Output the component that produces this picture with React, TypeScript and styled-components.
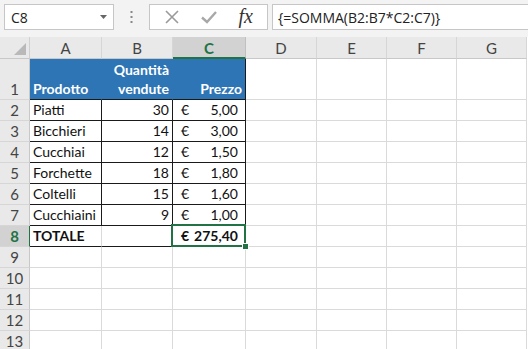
import React from "react";
import styled, { createGlobalStyle } from "styled-components";

const GlobalStyle = createGlobalStyle`
  html, body { margin: 0; padding: 0; background: #ffffff; }
  body { font-family: "Lato", "Liberation Sans", sans-serif; overflow: hidden; }
`;

const Page = styled.div`
  width: 528px;
  height: 349px;
  display: flex;
  flex-direction: column;
  overflow: hidden;
  background: #ffffff;
`;

const Toolbar = styled.div`
  flex: 0 0 37px;
  height: 37px;
  box-sizing: border-box;
  padding: 4px 0 7px 4px;
  display: flex;
  align-items: stretch;
  background: #f3f3f3;
`;

const NameBox = styled.div`
  width: 110px;
  box-sizing: border-box;
  border: 1px solid #c6c6c6;
  background: #ffffff;
  display: flex;
  align-items: center;
  justify-content: space-between;
  padding: 0 6px 0 6px;
  font-family: "Open Sans", "Liberation Sans", sans-serif;
  font-size: 14px;
  color: #222;
`;

const Separator = styled.div`
  width: 35px;
  display: flex;
  align-items: center;
  justify-content: center;
`;

const FxButtons = styled.div`
  width: 119px;
  box-sizing: border-box;
  border: 1px solid #c6c6c6;
  background: #ffffff;
  display: flex;
  align-items: center;
  justify-content: space-around;
  padding: 0 4px 0 4px;
`;

const FxLabel = styled.span`
  font-family: "Liberation Serif", "DejaVu Serif", serif;
  font-style: italic;
  font-size: 20px;
  color: #333;
  line-height: 1;
  margin-top: -2px;
`;

const FormulaInput = styled.div`
  flex: 1;
  margin-left: 4px;
  box-sizing: border-box;
  border: 1px solid #c6c6c6;
  border-right: none;
  background: #ffffff;
  display: flex;
  align-items: center;
  padding-left: 5px;
  font-family: "Open Sans", "Liberation Sans", sans-serif;
  font-size: 14px;
  color: #222;
  white-space: nowrap;
`;

const Sheet = styled.div`
  flex: 0 0 auto;
  display: grid;
  grid-template-columns: 30px 72px 71px 73px 71px 70px 70px 70px;
  grid-template-rows: 22px 41px repeat(13, 21px);
`;

const Corner = styled.div`
  box-sizing: border-box;
  background: #e9e9e9;
  border-right: 1px solid #d0d0d0;
  border-bottom: 1px solid #c8c8c8;
  display: flex;
  align-items: flex-end;
  justify-content: flex-end;
  padding: 0 3px 3px 0;
`;

const ColHead = styled.div<{ $sel?: boolean }>`
  box-sizing: border-box;
  background: ${(p) => (p.$sel ? "#d2d2d2" : "#e9e9e9")};
  color: ${(p) => (p.$sel ? "#217346" : "#444")};
  font-weight: ${(p) => (p.$sel ? 700 : 400)};
  border-right: 1px solid ${(p) => (p.$sel ? "#c0c0c0" : "#d6d6d6")};
  border-bottom: ${(p) => (p.$sel ? "2px solid #217346" : "1px solid #c8c8c8")};
  display: flex;
  align-items: center;
  justify-content: center;
  font-size: 15px;
  padding-top: 1px;
`;

const RowHead = styled.div<{ $sel?: boolean }>`
  box-sizing: border-box;
  background: ${(p) => (p.$sel ? "#d2d2d2" : "#e9e9e9")};
  color: ${(p) => (p.$sel ? "#217346" : "#444")};
  font-weight: ${(p) => (p.$sel ? 700 : 400)};
  border-right: 1px solid ${(p) => (p.$sel ? "#217346" : "#c8c8c8")};
  border-bottom: 1px solid #d6d6d6;
  display: flex;
  align-items: flex-end;
  justify-content: center;
  font-size: 15px;
  line-height: 18px;
  padding-bottom: 1px;
`;

type Align = "left" | "right";

const Cell = styled.div<{
  $align?: Align;
  $bold?: boolean;
  $head?: boolean;
  $rb?: string;
  $bb?: string;
}>`
  position: relative;
  box-sizing: border-box;
  background: ${(p) => (p.$head ? "#2e75b6" : "#ffffff")};
  color: ${(p) => (p.$head ? "#ffffff" : "#111")};
  font-weight: ${(p) => (p.$bold || p.$head ? 700 : 400)};
  border-right: 1px solid ${(p) => p.$rb || "#dadada"};
  border-bottom: 1px solid ${(p) => p.$bb || "#dadada"};
  display: flex;
  align-items: flex-end;
  justify-content: ${(p) => (p.$align === "right" ? "flex-end" : "flex-start")};
  text-align: ${(p) => p.$align || "left"};
  padding: 0 3px 1px 3px;
  font-size: 14px;
  line-height: ${(p) => (p.$head ? "19px" : "18px")};
  white-space: pre;
`;

const Money = styled.div`
  flex: 1;
  display: flex;
  justify-content: space-between;
  padding: 0 4px 0 5px;
`;

const Selection = styled.div`
  position: absolute;
  left: -2px;
  top: -2px;
  right: -1px;
  bottom: -1px;
  border: 2px solid #217346;
  pointer-events: none;
  z-index: 2;
`;

const Handle = styled.div`
  position: absolute;
  right: -4px;
  bottom: -4px;
  width: 5px;
  height: 5px;
  background: #217346;
  border: 1px solid #ffffff;
  z-index: 3;
`;

const BLACK = "#1a1a1a";
const BLUE = "#2e75b6";

const items: [string, number, string][] = [
  ["Piatti", 30, "5,00"],
  ["Bicchieri", 14, "3,00"],
  ["Cucchiai", 12, "1,50"],
  ["Forchette", 18, "1,80"],
  ["Coltelli", 15, "1,60"],
  ["Cucchiaini", 9, "1,00"],
];

const cols = ["A", "B", "C", "D", "E", "F", "G"];

const Cross = () => (
  <svg width="16" height="16" viewBox="0 0 16 16">
    <path d="M2 2 L14 14 M14 2 L2 14" stroke="#9a9a9a" strokeWidth="1.6" fill="none" />
  </svg>
);

const Check = () => (
  <svg width="18" height="16" viewBox="0 0 18 16">
    <path d="M2 8.5 L7 13 L16 3" stroke="#a8a8a8" strokeWidth="2.4" fill="none" />
  </svg>
);

const Arrow = () => (
  <svg width="7" height="4" viewBox="0 0 7 4">
    <path d="M0 0 L7 0 L3.5 4 Z" fill="#666" />
  </svg>
);

const Dots = () => (
  <svg width="3" height="12" viewBox="0 0 3 12">
    <rect x="0.5" y="0" width="2" height="2" fill="#888" />
    <rect x="0.5" y="5" width="2" height="2" fill="#888" />
    <rect x="0.5" y="10" width="2" height="2" fill="#888" />
  </svg>
);

const Triangle = () => (
  <svg width="12" height="12" viewBox="0 0 12 12">
    <path d="M12 0 L12 12 L0 12 Z" fill="#b9b9b9" />
  </svg>
);

const Empties = ({ from }: { from: number }) => (
  <>
    {cols.slice(from).map((c) => (
      <Cell key={c} />
    ))}
  </>
);

export default function App() {
  return (
    <Page>
      <GlobalStyle />
      <Toolbar>
        <NameBox>
          <span>C8</span>
          <Arrow />
        </NameBox>
        <Separator>
          <Dots />
        </Separator>
        <FxButtons>
          <Cross />
          <Check />
          <FxLabel>fx</FxLabel>
        </FxButtons>
        <FormulaInput>{"{=SOMMA(B2:B7*C2:C7)}"}</FormulaInput>
      </Toolbar>
      <Sheet>
        <Corner>
          <Triangle />
        </Corner>
        {cols.map((c) => (
          <ColHead key={c} $sel={c === "C"}>
            {c}
          </ColHead>
        ))}

        <RowHead>1</RowHead>
        <Cell $head $rb={BLUE} $bb={BLACK}>Prodotto</Cell>
        <Cell $head $align="right" $rb={BLUE} $bb={BLACK}>
          {"Quantità\nvendute"}
        </Cell>
        <Cell $head $align="right" $rb={BLACK} $bb={BLACK}>Prezzo</Cell>
        <Empties from={3} />

        {items.map(([name, qty, price], i) => (
          <React.Fragment key={name}>
            <RowHead>{i + 2}</RowHead>
            <Cell $rb={BLACK} $bb={BLACK}>{name}</Cell>
            <Cell $align="right" $rb={BLACK} $bb={BLACK}>{String(qty)}</Cell>
            <Cell $rb={BLACK} $bb={BLACK}>
              <Money>
                <span>€</span>
                <span>{price}</span>
              </Money>
            </Cell>
            <Empties from={3} />
          </React.Fragment>
        ))}

        <RowHead $sel>8</RowHead>
        <Cell $bold $bb={BLACK}>TOTALE</Cell>
        <Cell $bb={BLACK} />
        <Cell $bold $rb={BLACK} $bb={BLACK}>
          <Money>
            <span>€</span>
            <span>275,40</span>
          </Money>
          <Selection />
          <Handle />
        </Cell>
        <Empties from={3} />

        {[9, 10, 11, 12, 13].map((n) => (
          <React.Fragment key={n}>
            <RowHead>{n}</RowHead>
            <Empties from={0} />
          </React.Fragment>
        ))}
      </Sheet>
    </Page>
  );
}
